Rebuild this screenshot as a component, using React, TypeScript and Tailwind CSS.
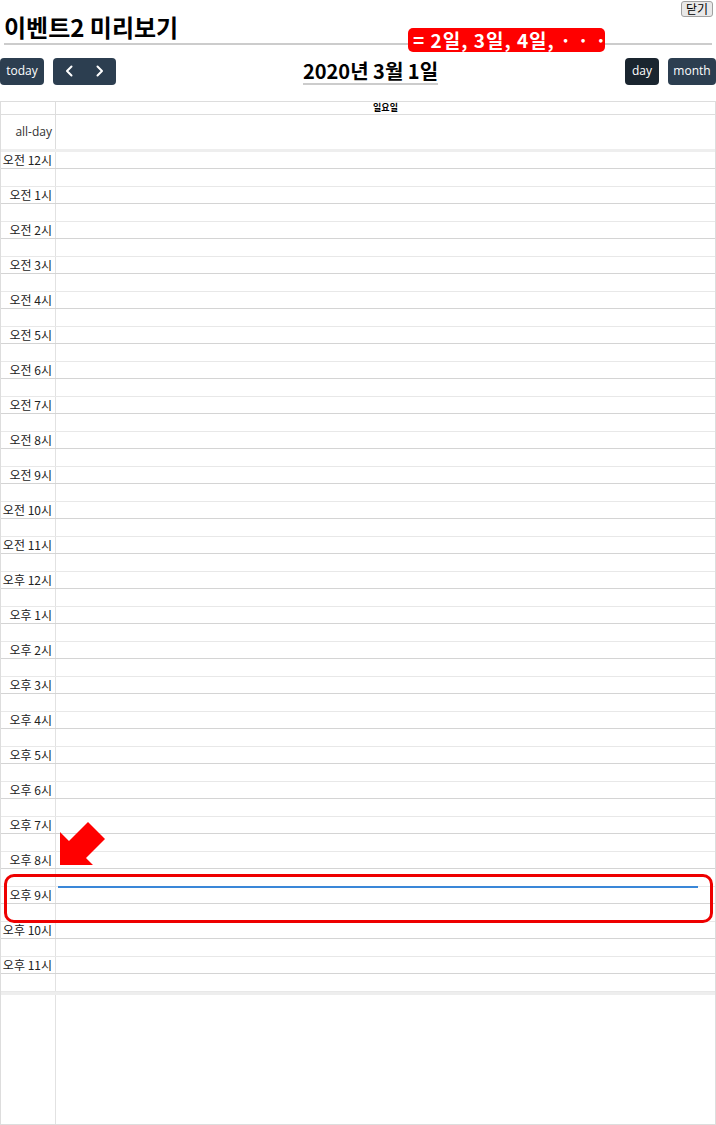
import React from "react";

const hourLabels: string[] = [];
for (let i = 0; i < 24; i++) {
    const ampm = i < 12 ? "오전" : "오후";
    const h = i % 12 === 0 ? 12 : i % 12;
    hourLabels.push(`${ampm} ${h}시`);
}

function Chevron({ dir }: { dir: "left" | "right" }) {
    return (
        <svg width="8" height="12" viewBox="0 0 8 12" fill="none">
            <polyline
                points={dir === "left" ? "6.5,1.5 2,6 6.5,10.5" : "1.5,1.5 6,6 1.5,10.5"}
                stroke="white"
                strokeWidth="2"
                strokeLinecap="round"
                strokeLinejoin="round"
            />
        </svg>
    );
}

export default function App() {
    return (
        <div className="relative w-[716px] h-[1125px] overflow-hidden bg-white text-black font-['Open_Sans','Noto_Sans_CJK_KR',sans-serif]">
            {/* header */}
            <h1 className="mx-[4px] pt-[11px] text-[24px] font-bold leading-[32px] border-b-2 border-[#ccc] font-['Noto_Sans_CJK_KR',sans-serif]">
                이벤트2 미리보기
            </h1>
            <button className="absolute right-[3px] top-[1px] px-[4px] text-[12px] leading-[14px] bg-[#e9e9e9] border border-[#a0a0a0] rounded-[3px] font-['Noto_Sans_CJK_KR',sans-serif]">
                닫기
            </button>
            <div className="absolute left-[408px] top-[28px] w-[197px] h-[24px] bg-[#f00] rounded-[5px] pl-[5px] text-white font-bold text-[19px] leading-[24px] tracking-[1px] whitespace-nowrap font-['Noto_Sans_CJK_KR',sans-serif]">
                = 2일, 3일, 4일, · · ·
            </div>

            {/* toolbar */}
            <div className="mt-[12px] flex justify-between items-center h-[28px]">
                <div className="flex items-center gap-[9px]">
                    <button className="h-[27px] w-[44px] bg-[#2c3e50] text-white text-[12px] rounded-[4px]">today</button>
                    <div className="flex h-[27px] w-[63px] bg-[#2c3e50] rounded-[4px]">
                        <button className="flex-1 flex items-center justify-center"><Chevron dir="left" /></button>
                        <button className="flex-1 flex items-center justify-center"><Chevron dir="right" /></button>
                    </div>
                </div>
                <h2 className="text-[20px] font-bold leading-[25px] border-b-2 border-[#ccc] font-['Noto_Sans_CJK_KR',sans-serif]">
                    2020년 3월 1일
                </h2>
                <div className="flex items-center gap-[9px]">
                    <button className="h-[27px] w-[34px] bg-[#1a252f] text-white text-[12px] rounded-[4px]">day</button>
                    <button className="h-[27px] w-[48px] bg-[#2c3e50] text-white text-[12px] rounded-[4px]">month</button>
                </div>
            </div>

            {/* calendar */}
            <div className="mt-[16px] border border-[#ddd]">
                <div className="flex h-[13px] border-b border-[#ddd]">
                    <div className="w-[55px] border-r border-[#ddd]" />
                    <div className="flex-1 text-center text-[9px] font-bold leading-[12px] font-['Noto_Sans_CJK_KR',sans-serif]">일요일</div>
                </div>
                <div className="flex h-[34px]">
                    <div className="w-[55px] border-r border-[#ddd] flex items-center justify-end pr-[3px] text-[12px] text-[#333]">all-day</div>
                    <div className="flex-1" />
                </div>
                <div className="h-[3px] bg-[#eee]" />

                <div className="relative">
                    {hourLabels.map((label) => (
                        <div key={label}>
                            <div className="flex h-[17px] border-b border-[#d4d4d4]">
                                <div className="w-[55px] border-r border-[#e2e2e2] pr-[3px] text-right text-[12px] leading-[16px] text-[#222] whitespace-nowrap font-['Noto_Sans_CJK_KR',sans-serif]">
                                    {label}
                                </div>
                                <div className="flex-1" />
                            </div>
                            <div className="flex h-[18px] border-b border-[#e8e8e8]">
                                <div className="w-[55px] border-r border-[#e2e2e2]" />
                                <div className="flex-1" />
                            </div>
                        </div>
                    ))}
                    {/* event */}
                    <div className="absolute left-[57px] w-[640px] top-[734px] h-[2px] bg-[#3a87d8]" />
                </div>

                <div className="h-[3px] bg-[#eee]" />
                <div className="flex h-[129px]">
                    <div className="w-[55px] border-r border-[#e2e2e2]" />
                    <div className="flex-1" />
                </div>
            </div>

            {/* annotations */}
            <div className="absolute left-[4px] top-[874px] w-[709px] h-[49px] border-[3px] border-[#e00] rounded-[10px]" />
            <svg className="absolute left-[55px] top-[818px]" width="55" height="50" viewBox="0 0 55 50">
                <polygon points="5,47 5,14 14,23 33,4 50,21 31,40 38,47" fill="#f00" />
            </svg>
        </div>
    );
}
